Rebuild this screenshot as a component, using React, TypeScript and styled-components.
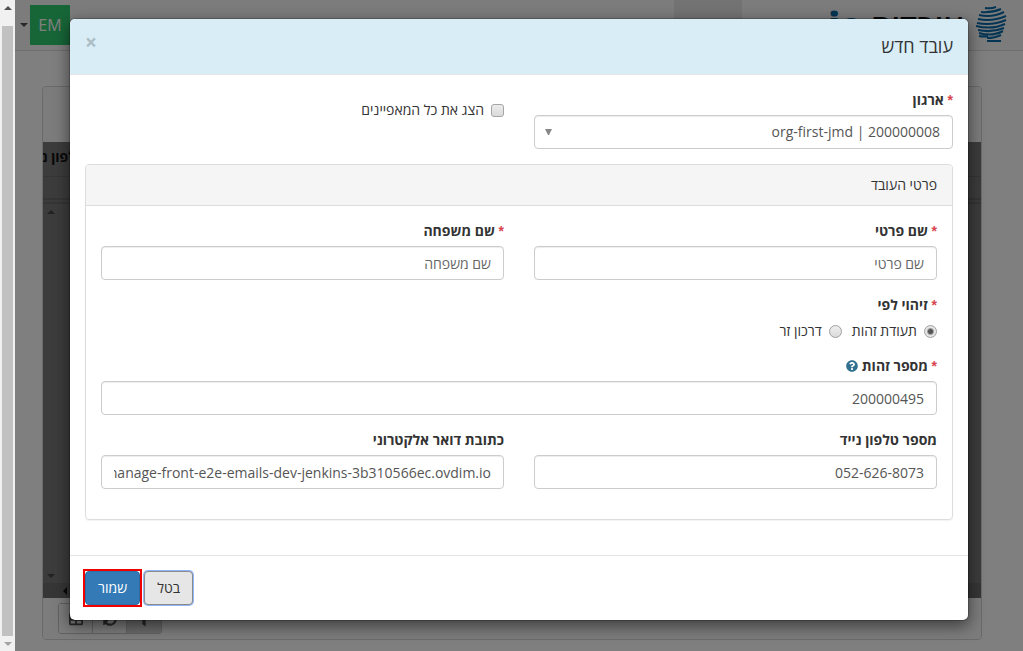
import React from 'react';
import styled, { createGlobalStyle, css } from 'styled-components';
import { FaQuestionCircle, FaSyncAlt, FaFilter, FaTable } from 'react-icons/fa';

const GlobalStyle = createGlobalStyle`
  *, *::before, *::after { box-sizing: border-box; }
  body {
    margin: 0;
    font-family: "Open Sans", "Noto Sans", sans-serif;
    font-size: 14px;
    line-height: 20px;
    color: #333;
    background: #fff;
  }
  button, input, select { font: inherit; margin: 0; }
`;

const Shell = styled.div`
  display: grid;
  grid-template-columns: 15px minmax(0, 1fr);
  height: 100vh;
  overflow: hidden;
`;

const ScrollTrack = styled.div`
  display: flex;
  flex-direction: column;
  align-items: center;
  background: #f1f1f1;
`;

const ScrollEnd = styled.div`
  display: flex;
  align-items: center;
  justify-content: center;
  height: 15px;
`;

const ScrollThumb = styled.div`
  flex: 1;
  width: 11px;
  margin-top: 11px;
  background: #c1c1c1;
`;

const Page = styled.div`
  position: relative;
  display: flex;
  flex-direction: column;
  direction: rtl;
  overflow: hidden;
`;

const Navbar = styled.header`
  display: flex;
  height: 51px;
  padding-right: 16px;
  background: #f8f8f8;
  border-bottom: 1px solid #dcdcdc;
`;

const Brand = styled.a`
  display: flex;
  align-items: flex-start;
  gap: 12px;
  padding-top: 5px;
  color: #111;
  text-decoration: none;
`;

const Wordmark = styled.span`
  direction: ltr;
  font-size: 32px;
  font-weight: 600;
  line-height: 40px;
  b { font-size: 36px; color: #0a6aa8; }
`;

const NavTab = styled.div`
  width: 68px;
  margin-right: 86px;
  background: #e7e7e7;
`;

const UserMenu = styled.button`
  display: flex;
  align-items: center;
  gap: 2px;
  margin: 5px auto 0 0;
  padding: 0 0 0 5px;
  height: 40px;
  border: 0;
  background: none;
`;

const Avatar = styled.span`
  width: 40px;
  height: 40px;
  font-size: 16px;
  line-height: 40px;
  text-align: center;
  color: #fff;
  background: #2ecc71;
`;

const Listing = styled.main`
  display: flex;
  flex-direction: column;
  flex: 1;
  margin: 35px 41px 11px 27px;
  border: 1px solid #d5d5d5;
  border-radius: 4px;
  overflow: hidden;
`;

const ListingTop = styled.div`
  height: 55px;
  background: #f8f8f8;
`;

const GridHead = styled.div`
  display: flex;
  justify-content: flex-end;
  height: 35px;
  padding: 5px 0;
  font-weight: 700;
  white-space: nowrap;
  background: #787878;
  border-bottom: 1px solid #6b6b6b;
  color: #111;
`;

const GridCell = styled.div`
  width: 42px;
`;

const GridFilter = styled.div`
  height: 27px;
  background: #787878;
  border-bottom: 6px double #6b6b6b;
`;

const GridBody = styled.div`
  display: flex;
  flex-direction: column;
  align-items: flex-end;
  justify-content: space-between;
  flex: 1;
  padding: 5px 0;
  background: #787878;
`;

const GridArrow = styled.div`
  padding: 0 4px;
  line-height: 0;
`;

const GridScroll = styled.div`
  display: flex;
  align-items: center;
  justify-content: flex-end;
  height: 15px;
  padding-left: 20px;
  background: #6c6c6c;
`;

const ListingFoot = styled.div`
  display: flex;
  justify-content: flex-end;
  height: 41px;
  padding: 5px 15px;
  background: #f8f8f8;
`;

const ToolGroup = styled.div`
  display: flex;
  height: 31px;
  border: 1px solid #c4c4c4;
  border-radius: 3px;
  overflow: hidden;
`;

const ToolButton = styled.button<{ $active?: boolean }>`
  display: flex;
  align-items: center;
  justify-content: center;
  width: 34px;
  padding: 0;
  border: 0;
  background: ${(p) => (p.$active ? '#d4d4d4' : '#f8f8f8')};
  color: #555;
  & + & { border-right: 1px solid #c4c4c4; }
`;

const Backdrop = styled.div`
  position: absolute;
  inset: 0;
  padding: 18px 10px;
  background: rgba(0, 0, 0, 0.5);
`;

const Dialog = styled.form`
  max-width: 900px;
  margin: 0 auto;
  background: #fff;
  background-clip: padding-box;
  border: 1px solid rgba(0, 0, 0, 0.2);
  border-radius: 6px;
  box-shadow: 0 5px 15px rgba(0, 0, 0, 0.5);
`;

const DialogHeader = styled.div`
  display: flex;
  justify-content: space-between;
  height: 56px;
  padding: 15px;
  background: #d9edf7;
  border-bottom: 1px solid #e5e5e5;
  border-radius: 5px 5px 0 0;
`;

const DialogTitle = styled.h4`
  margin: 0;
  font-size: 18px;
  font-weight: 400;
  line-height: 25px;
`;

const CloseButton = styled.button`
  height: 16px;
  padding: 0;
  border: 0;
  background: none;
  font-size: 21px;
  font-weight: 700;
  line-height: 16px;
  color: #000;
  opacity: 0.2;
`;

const DialogBody = styled.div`
  padding: 15px 15px 35px;
`;

const DialogFooter = styled.div`
  display: flex;
  justify-content: flex-end;
  gap: 4px;
  padding: 15px;
  border-top: 1px solid #e5e5e5;
`;

const Columns = styled.div`
  display: grid;
  grid-template-columns: repeat(2, minmax(0, 1fr));
  column-gap: 30px;
`;

const Field = styled.div`
  margin-bottom: 15px;
`;

const labelText = css`
  display: block;
  margin: 0 0 5px;
  font-weight: 700;
`;

const Label = styled.label`
  ${labelText}
`;

const Star = styled.span`
  font-family: "Liberation Sans", Arial, sans-serif;
  line-height: 14px;
  color: #d9434f;
`;

const HelpIcon = styled(FaQuestionCircle)`
  margin-right: 4px;
  font-size: 12px;
  vertical-align: -1px;
  color: #31708f;
`;

const control = css`
  display: block;
  width: 100%;
  height: 34px;
  padding: 6px 12px;
  color: #555;
  background: #fff;
  border: 1px solid #ccc;
  border-radius: 4px;
  box-shadow: inset 0 1px 1px rgba(0, 0, 0, 0.075);
`;

const TextInput = styled.input`
  ${control}
  &::placeholder { color: #666; opacity: 1; }
`;

const SelectBox = styled.div`
  position: relative;
`;

const Select = styled.select`
  ${control}
  appearance: none;
  direction: ltr;
  text-align: right;
  text-align-last: right;
`;

const SelectArrow = styled.svg`
  position: absolute;
  left: 11px;
  top: 14px;
  pointer-events: none;
`;

const Choice = styled.label`
  display: flex;
  align-items: center;
  gap: 7px;
`;

const ChoiceRow = styled.fieldset`
  display: flex;
  flex-wrap: wrap;
  gap: 0 10px;
  margin: 0 0 15px;
  padding: 0;
  border: 0;
  legend { ${labelText} padding: 0; margin-bottom: 6px; width: 100%; }
`;

const Checkbox = styled.input`
  appearance: none;
  width: 13px;
  height: 13px;
  border: 1px solid #a5a5a5;
  border-radius: 3px;
  background: linear-gradient(#ececec, #dadada);
`;

const Radio = styled.input`
  appearance: none;
  width: 13px;
  height: 13px;
  border: 1px solid #a0a0a0;
  border-radius: 50%;
  background: linear-gradient(#eee, #dadada);
  &:checked {
    background: radial-gradient(circle, #555 0 2px, #e6e6e6 4px);
  }
`;

const AllProps = styled.div`
  padding-top: 10px;
`;

const Panel = styled.section`
  border: 1px solid #ddd;
  border-radius: 4px;
  box-shadow: 0 1px 1px rgba(0, 0, 0, 0.05);
`;

const PanelHeading = styled.div`
  padding: 10px 15px;
  background: #f5f5f5;
  border-bottom: 1px solid #ddd;
  border-radius: 3px 3px 0 0;
`;

const PanelBody = styled.div`
  padding: 15px;
`;

const Button = styled.button<{ $primary?: boolean }>`
  height: 34px;
  padding: 6px 12px;
  border: 1px solid ${(p) => (p.$primary ? '#2e6da4' : '#8c8c8c')};
  border-radius: 4px;
  background: ${(p) => (p.$primary ? '#337ab7' : '#e6e6e6')};
  color: ${(p) => (p.$primary ? '#fff' : '#333')};
  ${(p) => !p.$primary && 'box-shadow: 0 0 0 1px #8fb4f8;'}
`;

const Highlight = styled.span`
  display: flex;
  margin: -2px;
  border: 2px solid #f00000;
`;

function Triangle({ up, color = '#505050' }: { up?: boolean; color?: string }) {
  return (
    <svg width="8" height="4" viewBox="0 0 8 4" aria-hidden="true">
      <path d={up ? 'M0 4L4 0L8 4Z' : 'M0 0L4 4L8 0Z'} fill={color} />
    </svg>
  );
}

function LeftTriangle() {
  return (
    <svg width="4" height="8" viewBox="0 0 4 8" aria-hidden="true">
      <path d="M4 0L0 4L4 8Z" fill="#111" />
    </svg>
  );
}

function HeadLogo() {
  return (
    <svg width="32" height="37" viewBox="0 0 32 37" fill="none" stroke="#0a6aa8" strokeWidth="2" aria-hidden="true">
      <path d="M10 3Q16 4 21 2M6 7Q17 8 26 4M4 10Q17 13 29 7M3 14Q17 17 31 11M2 18Q17 21 31 15M1 21Q17 25 30 19M3 25Q17 28 29 23M4 28Q17 32 28 26M4 31Q9 32 13 31M12 33Q20 33 26 30M12 36H26" />
    </svg>
  );
}

function Required({ children }: { children: React.ReactNode }) {
  return (
    <>
      <Star>*</Star> {children}
    </>
  );
}

export default function App() {
  return (
    <>
      <GlobalStyle />
      <Shell>
        <ScrollTrack>
          <ScrollEnd><Triangle up /></ScrollEnd>
          <ScrollThumb />
          <ScrollEnd><Triangle color="#a3a3a3" /></ScrollEnd>
        </ScrollTrack>
        <Page>
          <Navbar>
            <Brand href="#">
              <HeadLogo />
              <Wordmark><b>io</b> עובדים</Wordmark>
            </Brand>
            <NavTab />
            <UserMenu type="button">
              <Avatar>EM</Avatar>
              <Triangle />
            </UserMenu>
          </Navbar>
          <Listing>
            <ListingTop />
            <GridHead><GridCell>טלפון נייד</GridCell></GridHead>
            <GridFilter />
            <GridBody>
              <GridArrow><Triangle up color="#444" /></GridArrow>
              <GridArrow><Triangle color="#444" /></GridArrow>
            </GridBody>
            <GridScroll><LeftTriangle /></GridScroll>
            <ListingFoot>
              <ToolGroup>
                <ToolButton type="button" $active aria-label="סינון"><FaFilter /></ToolButton>
                <ToolButton type="button" aria-label="רענון"><FaSyncAlt /></ToolButton>
                <ToolButton type="button" aria-label="עמודות"><FaTable /></ToolButton>
              </ToolGroup>
            </ListingFoot>
          </Listing>
          <Backdrop>
            <Dialog onSubmit={(e) => e.preventDefault()}>
              <DialogHeader>
                <DialogTitle>עובד חדש</DialogTitle>
                <CloseButton type="button">×</CloseButton>
              </DialogHeader>
              <DialogBody>
                <Columns>
                  <Field>
                    <Label htmlFor="org"><Required>ארגון</Required></Label>
                    <SelectBox>
                      <Select id="org">
                        <option>org-first-jmd | 200000008</option>
                      </Select>
                      <SelectArrow width="7" height="6" viewBox="0 0 7 6"><path d="M0 0H7L4 6H3Z" fill="#888" /></SelectArrow>
                    </SelectBox>
                  </Field>
                  <AllProps>
                    <Choice><Checkbox type="checkbox" />הצג את כל המאפיינים</Choice>
                  </AllProps>
                </Columns>
                <Panel>
                  <PanelHeading>פרטי העובד</PanelHeading>
                  <PanelBody>
                    <Columns>
                      <Field>
                        <Label htmlFor="first"><Required>שם פרטי</Required></Label>
                        <TextInput id="first" placeholder="שם פרטי" />
                      </Field>
                      <Field>
                        <Label htmlFor="last"><Required>שם משפחה</Required></Label>
                        <TextInput id="last" placeholder="שם משפחה" />
                      </Field>
                    </Columns>
                    <ChoiceRow>
                      <legend><Required>זיהוי לפי</Required></legend>
                      <Choice><Radio type="radio" name="idkind" defaultChecked />תעודת זהות</Choice>
                      <Choice><Radio type="radio" name="idkind" />דרכון זר</Choice>
                    </ChoiceRow>
                    <Field>
                      <Label htmlFor="idnum"><Required>מספר זהות</Required><HelpIcon /></Label>
                      <TextInput id="idnum" defaultValue="200000495" />
                    </Field>
                    <Columns>
                      <Field>
                        <Label htmlFor="phone">מספר טלפון נייד</Label>
                        <TextInput id="phone" defaultValue="052-626-8073" />
                      </Field>
                      <Field>
                        <Label htmlFor="email">כתובת דואר אלקטרוני</Label>
                        <TextInput id="email" defaultValue="manage-front-e2e-emails-dev-jenkins-3b310566ec.ovdim.io" />
                      </Field>
                    </Columns>
                  </PanelBody>
                </Panel>
              </DialogBody>
              <DialogFooter>
                <Button type="button">בטל</Button>
                <Highlight><Button type="submit" $primary>שמור</Button></Highlight>
              </DialogFooter>
            </Dialog>
          </Backdrop>
        </Page>
      </Shell>
    </>
  );
}
